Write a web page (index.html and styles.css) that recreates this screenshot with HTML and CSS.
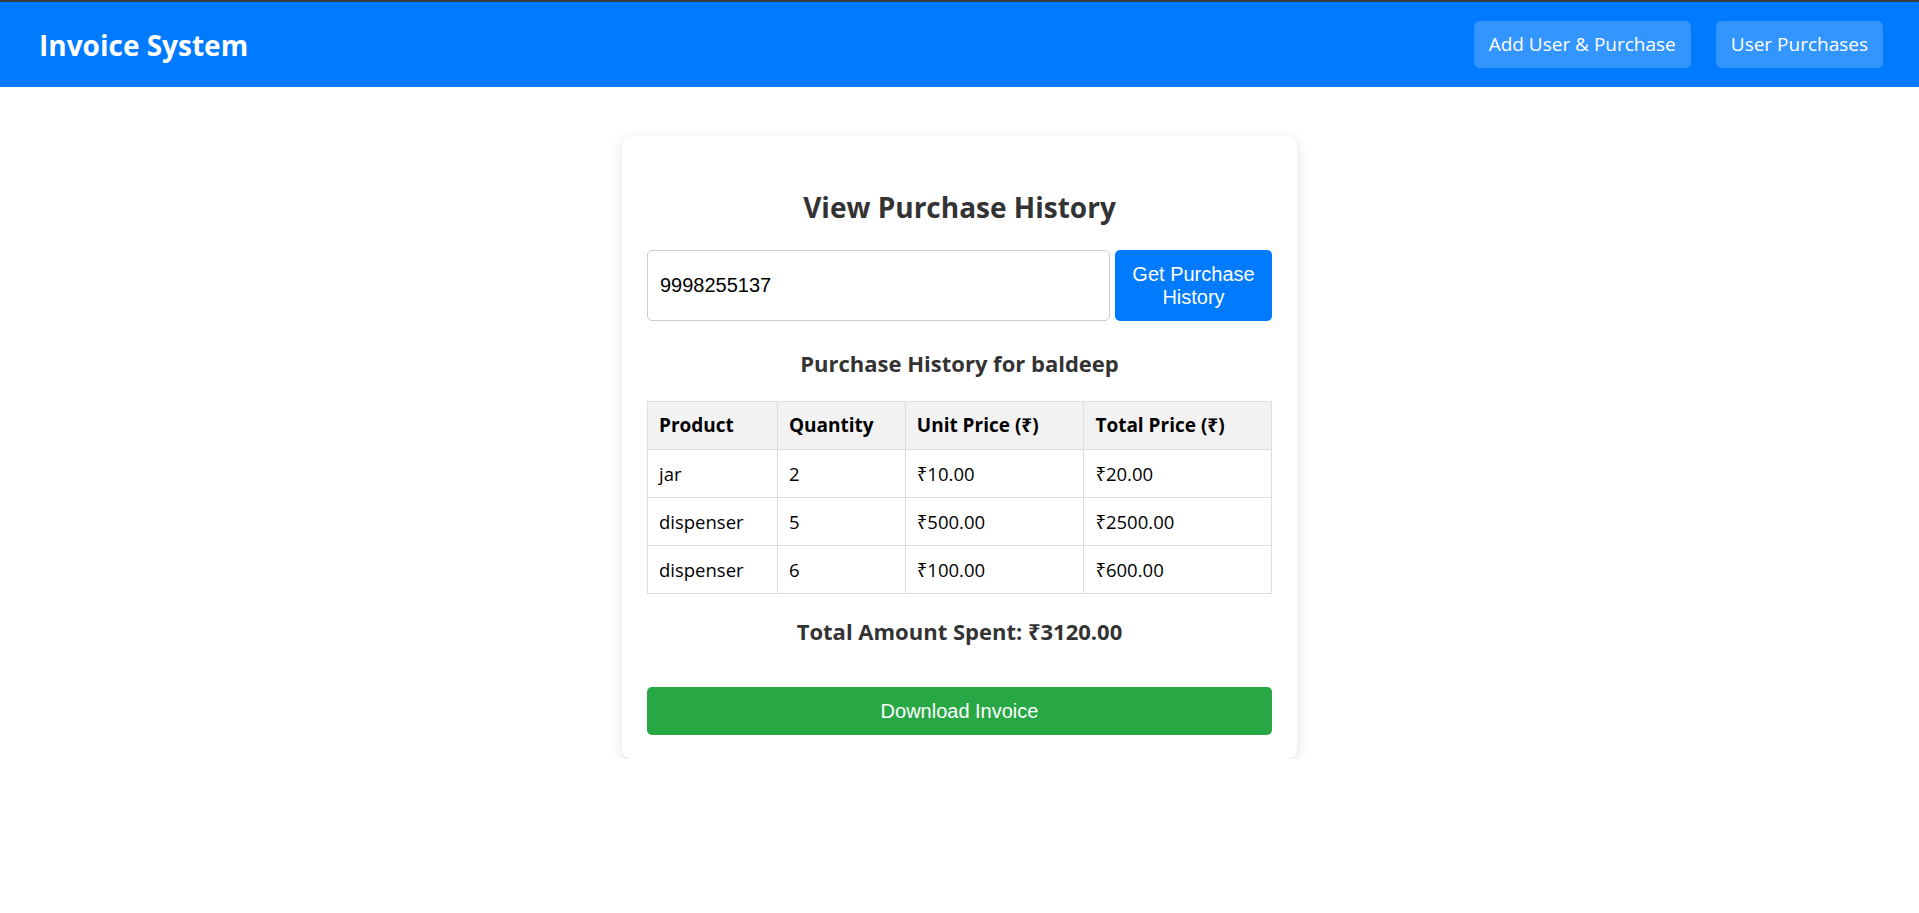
FILE: index.html
```html
<!DOCTYPE html>
<html lang="en">
<head>
<meta charset="utf-8">
<title>Invoice System</title>
<link rel="stylesheet" href="styles.css">
</head>
<body>
<header class="navbar">
  <h1 class="brand">Invoice System</h1>
  <nav class="nav-links">
    <a class="nav-btn" href="#">Add User &amp; Purchase</a>
    <a class="nav-btn" href="#">User Purchases</a>
  </nav>
</header>
<main class="page">
  <section class="card">
    <h2 class="card-title">View Purchase History</h2>
    <form class="search-row">
      <input class="phone-input" type="text" value="9998255137">
      <button class="search-btn" type="button">Get Purchase History</button>
    </form>
    <h3 class="sub-title">Purchase History for baldeep</h3>
    <table class="history">
      <colgroup>
        <col class="c-product">
        <col class="c-qty">
        <col class="c-unit">
        <col class="c-total">
      </colgroup>
      <thead>
        <tr><th>Product</th><th>Quantity</th><th>Unit Price (₹)</th><th>Total Price (₹)</th></tr>
      </thead>
      <tbody>
        <tr><td>jar</td><td>2</td><td>₹10.00</td><td>₹20.00</td></tr>
        <tr><td>dispenser</td><td>5</td><td>₹500.00</td><td>₹2500.00</td></tr>
        <tr><td>dispenser</td><td>6</td><td>₹100.00</td><td>₹600.00</td></tr>
      </tbody>
    </table>
    <h3 class="total">Total Amount Spent: ₹3120.00</h3>
    <button class="download-btn" type="button">Download Invoice</button>
  </section>
</main>
</body>
</html>
```
FILE: styles.css
```css
* { box-sizing: border-box; }

html, body {
  margin: 0;
  padding: 0;
  background: #ffffff;
}

body {
  font-family: "Open Sans", "Noto Sans", "DejaVu Sans", sans-serif;
  color: #000;
}

.navbar {
  height: 87px;
  border-top: 2px solid #3a3a3a;
  background: #007bff;
  display: flex;
  align-items: center;
  justify-content: space-between;
  padding: 0 36px 0 39px;
}

.brand {
  margin: 0;
  color: #fff;
  font-size: 28px;
  line-height: 36px;
  font-weight: 700;
}

.nav-links {
  display: flex;
  gap: 25px;
}

.nav-btn {
  display: block;
  height: 47px;
  padding: 0 15px;
  line-height: 47px;
  font-size: 19px;
  color: #fff;
  text-decoration: none;
  background: rgba(255, 255, 255, 0.2);
  border-radius: 6px;
}

.page {
  display: flex;
  justify-content: center;
  padding-top: 49px;
}

.card {
  width: 675px;
  padding: 25px 25px 24px;
  background: #fff;
  border-radius: 10px;
  box-shadow: 0 4px 14px rgba(0, 0, 0, 0.12);
  display: flex;
  flex-direction: column;
}

.card-title {
  margin: 28px 0 25px;
  text-align: center;
  color: #333;
  font-size: 28px;
  line-height: 36px;
  font-weight: 700;
}

.search-row {
  display: flex;
  gap: 5px;
  margin: 0;
  height: 71px;
}

.phone-input {
  flex: 1 1 auto;
  min-width: 0;
  border: 1px solid #ccc;
  border-radius: 5px;
  padding: 0 12px;
  font-family: "Liberation Sans", Arial, sans-serif;
  font-size: 20px;
  color: #000;
  outline: none;
}

.search-btn {
  flex: 0 0 157px;
  border: none;
  border-radius: 5px;
  background: #007bff;
  color: #fff;
  padding: 0 14px;
  font-family: "Liberation Sans", Arial, sans-serif;
  font-size: 20px;
  line-height: 23px;
}

.sub-title {
  margin: 27px 0 23px;
  text-align: center;
  color: #333;
  font-size: 22px;
  line-height: 30px;
  font-weight: 700;
}

.history {
  width: 100%;
  border-collapse: collapse;
  font-size: 18.5px;
}

.c-product { width: 130px; }
.c-qty { width: 128px; }
.c-unit { width: 179px; }
.c-total { width: 188px; }

.history th,
.history td {
  border: 1px solid #ddd;
  padding: 12px 11px;
  height: 48px;
  line-height: 23px;
  text-align: left;
  vertical-align: middle;
  color: #000;
}

.history th {
  background: #f2f2f2;
  font-weight: 700;
  font-size: 19px;
}

.total {
  margin: 22px 0 41px;
  text-align: center;
  color: #333;
  font-size: 22px;
  line-height: 30px;
  font-weight: 700;
}

.download-btn {
  height: 48px;
  border: none;
  border-radius: 5px;
  background: #28a745;
  color: #fff;
  font-family: "Liberation Sans", Arial, sans-serif;
  font-size: 20px;
  line-height: 23px;
}
```
